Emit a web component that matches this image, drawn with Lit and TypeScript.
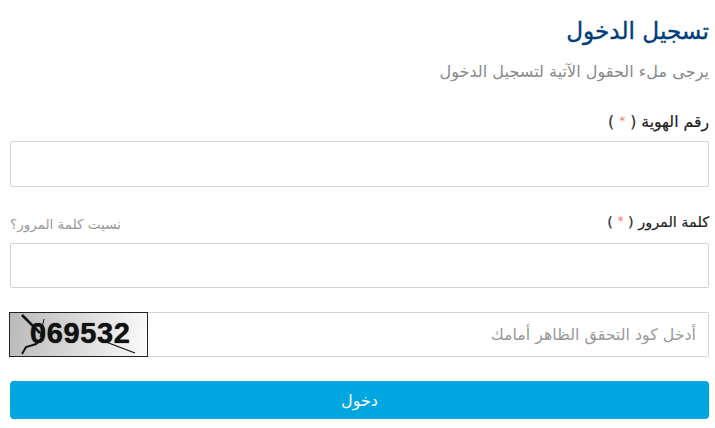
import { LitElement, html, css, svg } from "lit";
import { customElement } from "lit/decorators.js";

@customElement("app-root")
export class AppRoot extends LitElement {
  static styles = css`
    :host { display: block; background: #fff; font-family: "DejaVu Sans", sans-serif; }
    form { direction: rtl; display: flex; flex-direction: column; padding: 0 6px 0 6px; margin: 0 0 0 4px; height: 428px; box-sizing: border-box; }
    h1 { margin: 15px 0 0; font-size: 23.2px; line-height: 32px; height: 32px; font-weight: 400; color: #003d7a; -webkit-text-stroke: 0.35px #003d7a; }
    .sub { margin: 15px 0 0; font-size: 16.1px; line-height: 20px; height: 20px; color: #8a8a8a; }
    .row { display: flex; justify-content: space-between; align-items: center; height: 20px; }
    .first { margin-top: 29px; }
    .second { margin-top: 25px; }
    label { font-size: 15.7px; color: #222; -webkit-text-stroke: 0.2px #222; }
    .second label { font-size: 14.4px; }
    .paren { color: #333; }
    .star { color: #f08080; -webkit-text-stroke: 0; font-size: 12px; vertical-align: 2px; }
    .forgot { font-size: 13.5px; color: #999; padding-top: 3px; }
    .field { display: block; width: 100%; box-sizing: border-box; border: 1px solid #ced4da; border-radius: 2px; background: #fff; }
    .h46 { height: 46px; margin-top: 10px; }
    .h45 { height: 45px; margin-top: 11px; }
    .captcha { display: flex; margin-top: 24px; height: 45px; }
    .code { flex: 1; display: flex; align-items: center; padding: 0 12px; border: 1px solid #ced4da; border-left: none; border-radius: 0 2px 2px 0; font-size: 15.85px; color: #9a9a9a; }
    .img { position: relative; width: 139px; height: 45px; margin-left: -1px; box-sizing: border-box; border: 1px solid #222; background: linear-gradient(100deg, #b9b9b9 0%, #dedede 55%, #fbfbfb 100%); direction: ltr; overflow: hidden; }
    .digits { position: absolute; left: 20px; top: 1px; font: 700 29px/38px "Liberation Sans", sans-serif; letter-spacing: 0.6px; color: #111; text-shadow: 0 0 1px #111; }
    .img svg { position: absolute; left: 0; top: 0; }
    button { margin-top: 24px; height: 38px; width: 100%; border: none; border-radius: 4px; background: #00a6e0; color: #fff; font: 16px "DejaVu Sans", sans-serif; }
  `;

  render() {
    return html`<form>
      <h1>تسجيل الدخول</h1>
      <p class="sub">يرجى ملء الحقول الآتية لتسجيل الدخول</p>
      <div class="row first"><label>رقم الهوية <span class="paren">( <span class="star">*</span> )</span></label></div>
      <div class="field h46"></div>
      <div class="row second">
        <label>كلمة المرور <span class="paren">( <span class="star">*</span> )</span></label>
        <span class="forgot">نسيت كلمة المرور؟</span>
      </div>
      <div class="field h45"></div>
      <div class="captcha">
        <div class="code">أدخل كود التحقق الظاهر أمامك</div>
        <div class="img">
          <span class="digits">069532</span>
          <svg width="137" height="43" viewBox="0 0 137 43" fill="none" stroke="#111">
            ${svg`<path d="M12 2 L30 20" stroke-width="2.5"/>
            <path d="M12 41 L16 34 L26 31 L31 27" stroke-width="2"/>
            <path d="M96 29 L125 40" stroke-width="1.2"/>
            <path d="M34 6 L30 24" stroke-width="1"/>`}
          </svg>
        </div>
      </div>
      <button type="button">دخول</button>
    </form>`;
  }
}
